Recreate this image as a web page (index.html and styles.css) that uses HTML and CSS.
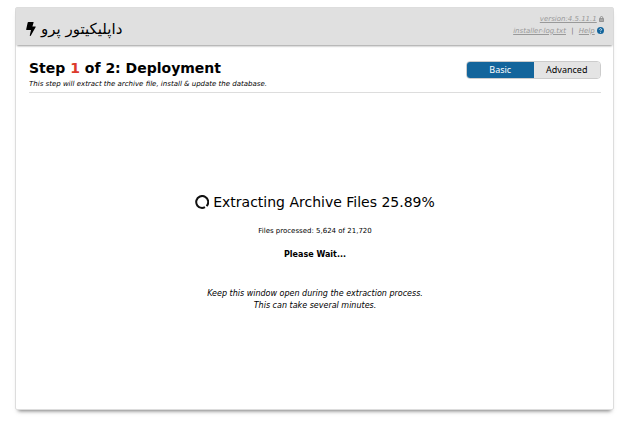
FILE: index.html
```html
<!DOCTYPE html>
<html lang="en">
<head>
    <meta charset="UTF-8">
    <meta name="viewport" content="width=device-width, initial-scale=1.0">
    <title>Installer</title>
    <link rel="stylesheet" href="styles.css">
</head>
<body>
    <div class="content">
        <header class="header">
            <div class="brand">
                <svg class="bolt" viewBox="0 0 10 14" aria-hidden="true">
                    <path d="M2.4 0h4.8q.6 0 .4.6L6.4 4.4H9.3q.7 0 .4.7L4.9 13.6q-.3.5-.8.3-.4-.2-.3-.7L5 8H.8Q.1 8 .2 7.3L1.7.6Q1.9 0 2.4 0z"/>
                </svg>
                <span lang="fa" dir="rtl">داپلیکیتور پرو</span>
            </div>
            <div class="header-links">
                <div>
                    <a href="#">version:4.5.11.1</a>
                    <svg class="lock" viewBox="0 0 6 7" aria-hidden="true">
                        <path d="M1.5 3V2a1.5 1.5 0 0 1 3 0v1" fill="none" stroke="#888"/>
                        <path d="M.5 3h5v3.5h-5z" fill="#aaa" stroke="#888"/>
                    </svg>
                </div>
                <div>
                    <a href="#">installer-log.txt</a>
                    <span class="divider">|</span>
                    <a href="#">Help</a>
                    <svg class="help" viewBox="0 0 14 14" aria-hidden="true">
                        <circle cx="7" cy="7" r="7" fill="#13659c"/>
                        <path d="M4.8 5.4C4.9 2.6 9.4 2.7 9.2 5.3 9.1 6.8 7 6.7 7 8.4M7 9.8v1.6" fill="none" stroke="#fff" stroke-width="1.6"/>
                    </svg>
                </div>
            </div>
        </header>

        <main class="main">
            <div class="step">
                <div>
                    <h1>Step <span class="step-number">1</span> of 2: Deployment</h1>
                    <p class="step-info">This step will extract the archive file, install &amp; update the database.</p>
                </div>
                <div class="mode">
                    <button type="button" class="active">Basic</button>
                    <button type="button">Advanced</button>
                </div>
            </div>

            <section class="progress">
                <h2>
                    <svg class="spinner" viewBox="0 0 14 14" aria-hidden="true">
                        <path d="M11.6 11.1A6 6 0 1 0 7 13a6 6 0 0 0 3-.8"/>
                    </svg>
                    Extracting Archive Files 25.89%
                </h2>
                <p class="files">Files processed: 5,624 of 21,720</p>
                <p class="wait">Please Wait...</p>
                <p class="notice">Keep this window open during the extraction process.<br>This can take several minutes.</p>
            </section>
        </main>
    </div>
</body>
</html>
```
FILE: styles.css
```css
* {
    box-sizing: border-box;
}

body {
    display: flex;
    min-height: 100vh;
    margin: 0;
    padding: 7px 10px 13px 15px;
    background: #fff;
    color: #000;
    font-family: Verdana, "DejaVu Sans", sans-serif;
    font-size: 8px;
}

h1, h2, p {
    margin: 0;
}

.content {
    flex: 1;
    border: 1px solid #ddd;
    border-radius: 2px;
    box-shadow: 0 4px 4px -3px #777;
}

.header {
    display: flex;
    justify-content: space-between;
    align-items: center;
    height: 37px;
    padding: 0 9px 0 10px;
    background: #e0e0e0;
    box-shadow: 0 2px 2px -1px #999;
}

.brand {
    display: flex;
    align-items: center;
    gap: 5px;
    padding-top: 4px;
    font-size: 15px;
    line-height: 20px;
}

.bolt {
    width: 10px;
    height: 14px;
}

.header-links {
    padding-bottom: 4px;
    color: #777;
    font-size: 7px;
    font-style: italic;
    line-height: 12px;
    text-align: right;
}

.header-links a {
    color: #999;
}

.header-links svg {
    vertical-align: -1px;
}

.divider {
    margin: 0 3px;
    font-style: normal;
}

.lock {
    width: 5px;
    height: 6px;
}

.help {
    width: 7px;
    height: 7px;
}

.main {
    padding: 14px 12px 14px 13px;
}

.step {
    display: flex;
    justify-content: space-between;
    align-items: flex-start;
    padding-bottom: 2px;
    border-bottom: 1px solid #ddd;
}

h1 {
    font-size: 14px;
    line-height: 19px;
}

.step-number {
    color: #dc3b2c;
}

.step-info {
    font-size: 7px;
    font-style: italic;
    line-height: 12px;
}

.mode {
    display: flex;
    width: 135px;
    height: 18px;
    margin-top: 2px;
    overflow: hidden;
    border: 1px solid #ccc;
    border-radius: 4px;
}

.mode button {
    flex: 1;
    padding: 0;
    border: 0;
    background: #e4e4e4;
    color: #000;
    font-family: "Noto Sans", sans-serif;
    font-size: 9px;
    line-height: 12px;
    cursor: pointer;
}

.mode .active {
    background: #13659c;
    color: #fff;
}

.progress {
    padding-top: 99px;
    text-align: center;
}

h2 {
    display: flex;
    justify-content: center;
    align-items: center;
    gap: 4px;
    font-size: 14px;
    font-weight: normal;
    line-height: 20px;
}

.spinner {
    width: 14px;
    height: 14px;
    fill: none;
    stroke: #111;
    stroke-width: 2;
}

.files {
    margin-top: 13px;
    font-size: 7px;
    line-height: 12px;
}

.wait {
    margin-top: 12px;
    font-weight: bold;
    line-height: 12px;
}

.notice {
    margin-top: 27px;
    font-style: italic;
    line-height: 12px;
}
```
